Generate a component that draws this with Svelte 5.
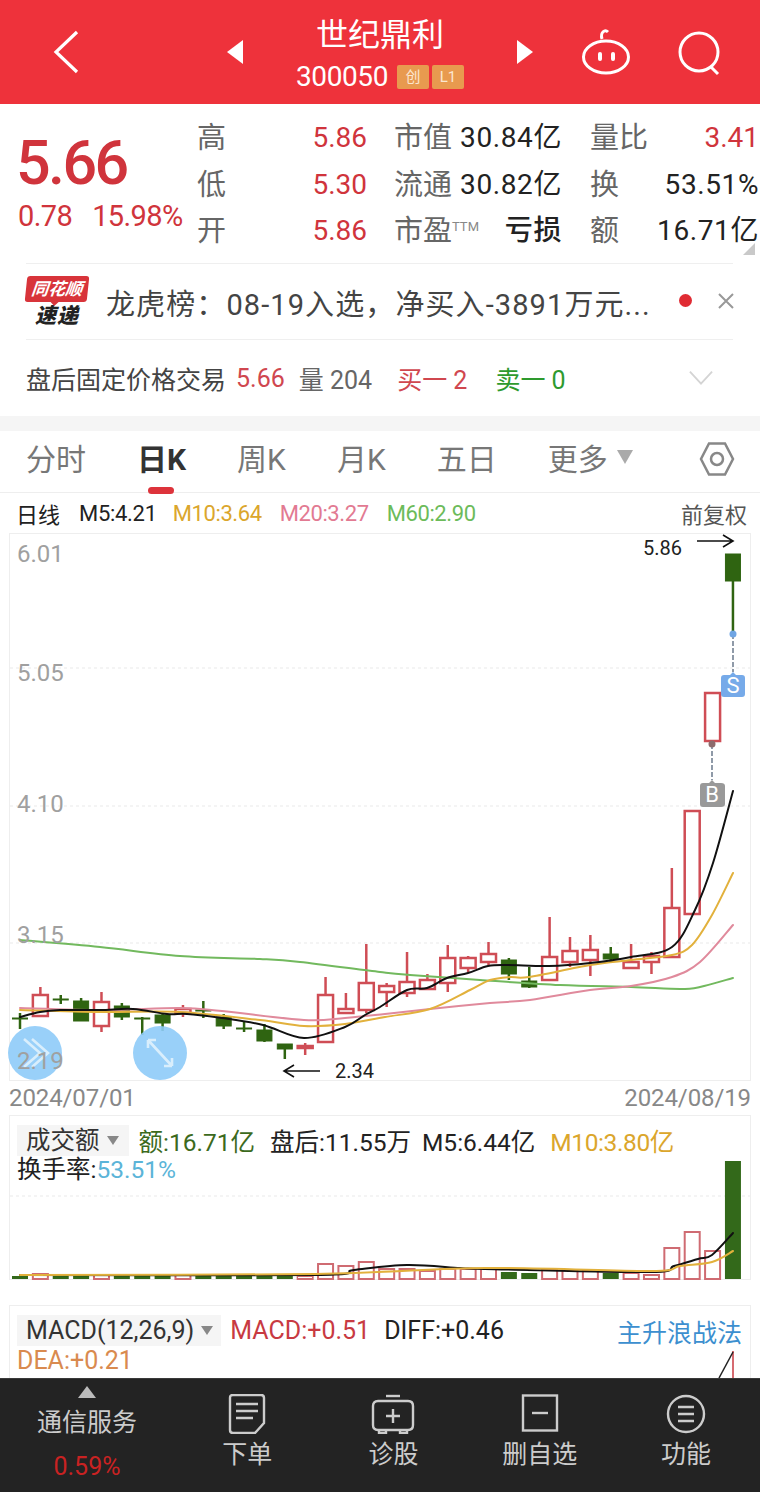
<script>
  const X0 = 20, DX = 20.37;
  // [rising, high, bodyTop, bodyBottom, low]
  const raw = [
    [0,1013,1018,1018,1029],[1,987,995,1016,1016],[0,995,999,999,1004],[0,998,1001,1021,1021],
    [1,992,1002,1026,1032],[0,1003,1006,1017,1020],[0,1017,1018,1018,1035],[0,1013,1015,1023,1031],
    [1,1005,1009,1013,1017],[0,1001,1010,1010,1018],[0,1014,1017,1026,1029],[0,1021,1028,1028,1032],
    [0,1024,1030,1041,1042],[0,1044,1044,1049,1059],[1,1043,1046,1048,1055],[1,977,995,1042,1042],
    [1,993,1009,1013,1013],[1,944,983,1010,1013],[1,983,986,992,1007],[1,952,982,993,997],
    [1,974,980,989,989],[1,945,958,983,992],[1,956,958,968,972],[1,942,954,962,965],
    [0,958,960,974,980],[0,967,981,987,988],[1,917,957,980,980],[1,937,951,962,967],
    [1,935,950,960,976],[0,947,954,959,962],[1,944,962,968,968],[1,952,956,962,974],
    [1,868,908,957,957],[1,811,811,914,914],[1,693,693,741,741],[0,554,554,581,633]
  ];
  const candles = raw.map((c, i) => ({ up: !!c[0], x: X0 + DX * i, high: c[1], top: c[2], bottom: c[3], low: c[4] }));

  // Catmull-Rom through the sampled points, so the averages read as smooth curves
  function smooth(p) {
    let d = `M${p[0][0]} ${p[0][1]}`;
    for (let i = 0; i < p.length - 1; i++) {
      const a = p[Math.max(i - 1, 0)], b = p[i], c = p[i + 1], e = p[Math.min(i + 2, p.length - 1)];
      const k = 1 / 6;
      d += ` C${b[0] + (c[0] - a[0]) * k} ${b[1] + (c[1] - a[1]) * k} ${c[0] - (e[0] - b[0]) * k} ${c[1] - (e[1] - b[1]) * k} ${c[0]} ${c[1]}`;
    }
    return d;
  }
  const m5 = smooth([[20,1017],[40,1012],[60,1010],[100,1010],[133,1009],[167,1014],[187,1014],[222,1018],[263,1025],[304,1038],[345,1027],[365,1015],[380,1007],[407,990],[427,988],[447,978],[468,973],[488,966],[508,965],[549,966],[590,963],[631,957],[672,947],[695,910],[713,863],[733,791]]);
  const m10 = smooth([[20,1010],[100,1012],[180,1012],[260,1020],[304,1026],[345,1024],[385,1017],[430,1009],[470,990],[490,980],[510,977],[529,977],[590,965],[631,960],[672,955],[692,945],[712,915],[733,873]]);
  const m20 = smooth([[20,1008],[100,1010],[180,1008],[222,1011],[304,1020],[345,1018],[385,1014],[430,1009],[490,1003],[530,1000],[590,990],[631,986],[672,977],[700,962],[733,925]]);
  const m60 = smooth([[20,940],[100,947],[180,956],[260,959],[300,962],[380,972],[410,975],[480,980],[560,985],[631,987],[680,989],[700,987],[733,978]]);

  const volTops = [1276,1274,1276,1276,1275,1276,1276,1276,1275,1276,1276,1276,1276,1276,1276,1264,1266,1262,1269,1269,1271,1269,1269,1269,1272,1273,1270,1270,1270,1273,1273,1275,1248,1232,1251,1161];
  const volUp = raw.map((c) => !!c[0]);
  const vols = volTops.map((t, i) => ({ x: X0 + DX * i, top: t, up: volUp[i] }));
  const v5 = smooth([[20,1275],[315,1275],[354,1270],[407,1265],[460,1268],[485,1269],[650,1272],[674,1266],[698,1259],[712,1255],[733,1233]]);
  const v10 = smooth([[20,1275],[315,1274],[485,1268],[650,1271],[680,1266],[712,1262],[733,1251]]);
  const axis = [[6.01,562],[5.05,681],[4.10,812],[3.15,943],[2.19,1069]];

  const stats = [
    ['高','5.86','市值','30.84亿',false,'量比','3.41',true],
    ['低','5.30','流通','30.82亿',false,'换','53.51%',false],
    ['开','5.86','市盈','亏损',true,'额','16.71亿',false]
  ];
</script>

<div class="page">
  <header class="top">
    <svg class="back" viewBox="0 0 28 46"><path d="M25 3 L4 23 L25 43" /></svg>
    <svg class="tri" viewBox="0 0 18 24"><path d="M17 0V24L1 12Z" /></svg>
    <div class="title">
      <div class="name">世纪鼎利</div>
      <div class="code">300050<span class="tag">创</span><span class="tag">L1</span></div>
    </div>
    <svg class="tri" viewBox="0 0 18 24"><path d="M1 0V24L17 12Z" /></svg>
    <svg class="robot" viewBox="0 0 50 50">
      <path class="ln" d="M21 12 C19 5 24 2 27 5" />
      <ellipse class="ln" cx="25" cy="30" rx="22.5" ry="16" />
      <rect class="fl" x="17" y="25" width="4" height="9" rx="2" />
      <rect class="fl" x="30" y="25" width="4" height="9" rx="2" />
    </svg>
    <svg class="search" viewBox="0 0 46 46">
      <circle class="ln" cx="21" cy="21" r="19" />
      <path class="ln" d="M33 36 L40 43" />
    </svg>
  </header>

  <section class="quote">
    <div class="price">
      <div class="big">5.66</div>
      <div class="chg"><span>0.78</span><span>15.98%</span></div>
    </div>
    <div class="stats">
      {#each stats as s}
        <span class="lb">{s[0]}</span>
        <span class="val red">{s[1]}</span>
        <span class="lb">{s[2]}{#if s[2] === '市盈'}<sup>TTM</sup>{/if}</span>
        <span class="val wide" class:bold={s[4]}>{s[3]}</span>
        <span class="lb">{s[5]}</span>
        <span class="val" class:red={s[7]} class:wide={!s[7]}>{s[6]}</span>
      {/each}
    </div>
    <svg class="corner" viewBox="0 0 12 12"><path d="M12 0V12H0Z" /></svg>
  </section>

  <section class="news">
    <div class="logo">
      <div class="logo-top">同花顺</div>
      <div class="logo-bot">速递</div>
    </div>
    <div class="news-text">龙虎榜：08-19入选，净买入-3891万元...</div>
    <span class="dot"></span>
    <svg class="close" viewBox="0 0 18 18"><path d="M2 2L16 16M16 2L2 16" /></svg>
  </section>

  <section class="after">
    <span>盘后固定价格交易</span>
    <span class="r num g1">5.66</span>
    <span class="gr g2">量 204</span>
    <span class="r g3">买一 2</span>
    <span class="gn g4">卖一 0</span>
    <svg class="chev" viewBox="0 0 26 16"><path d="M1 1L13 14L25 1" /></svg>
  </section>

  <div class="band"></div>

  <nav class="tabs">
    <span class="tab t1">分时</span>
    <span class="tab active">日K</span>
    <span class="tab">周K</span>
    <span class="tab">月K</span>
    <span class="tab">五日</span>
    <span class="tab">更多<i class="down"></i></span>
    <svg class="hex" viewBox="0 0 36 36">
      <path d="M10 2.5H26L34 18L26 33.5H10L2 18Z" />
      <circle cx="18" cy="18" r="6" />
    </svg>
  </nav>

  <main class="main">
    <div class="ma">
      <span class="ma-a">日线</span>
      <span class="ma-b">M5:4.21</span>
      <span class="c10">M10:3.64</span>
      <span class="c20">M20:3.27</span>
      <span class="c60">M60:2.90</span>
      <span class="fq">前复权</span>
    </div>

    <div class="box kline">
      <svg class="chart" viewBox="9 533 742 547" width="742" height="547">
        {#each [668,806,943] as y}
          <line class="grid" x1="10" x2="750" y1={y} y2={y} />
        {/each}
        {#each candles as c}
          <g class={c.up ? 'up' : 'dn'}>
            <line x1={c.x} x2={c.x} y1={c.high} y2={c.top} />
            <line x1={c.x} x2={c.x} y1={c.bottom} y2={c.low} />
            <rect x={c.x - 7.5} y={c.top} width="15" height={Math.max(c.bottom - c.top, 1)} />
          </g>
        {/each}
        <path class="ml l60" d={m60} />
        <path class="ml l20" d={m20} />
        <path class="ml l10" d={m10} />
        <path class="ml l5" d={m5} />

        <line class="dash" x1="733" x2="733" y1="634" y2="672" />
        <circle class="s-dot" cx="733" cy="634" r="3.5" />
        <path class="s-flag" d="M724 675 H730 L733 672 L736 675 H742 Q745 675 745 678 V694 Q745 697 742 697 H724 Q721 697 721 694 V678 Q721 675 724 675Z" />
        <text class="flag" x="733" y="693">S</text>
        <line class="dash" x1="712" x2="712" y1="744" y2="780" />
        <circle class="b-dot" cx="712" cy="744" r="3.5" />
        <path class="b-flag" d="M703 783 H709 L712 780 L715 783 H721 Q725 783 725 786 V804 Q725 807 721 807 H703 Q700 807 700 804 V786 Q700 783 703 783Z" />
        <text class="flag" x="712" y="802">B</text>

        <text class="mark" x="643" y="555">5.86</text>
        <path class="arrow" d="M697 541H733M723 535L733 541L723 547" />
        <text class="mark" x="335" y="1078">2.34</text>
        <path class="arrow" d="M320 1071H284M294 1065L284 1071L294 1077" />

        <circle class="fab" cx="35" cy="1053" r="27" />
        <path class="fab-ln" d="M24 1039L40 1053L24 1067M32 1039L48 1053L32 1067" />
        <circle class="fab" cx="160" cy="1053" r="27" />
        <path class="fab-ln" d="M148 1040H156M148 1040V1048M148 1040L172 1066M172 1066H164M172 1066V1058" />
        {#each axis as a}
          <text class="axis" x="17" y={a[1]}>{a[0].toFixed(2)}</text>
        {/each}
      </svg>
    </div>

    <div class="dates"><span>2024/07/01</span><span>2024/08/19</span></div>

    <div class="box vol">
      <svg class="chart" viewBox="9 1115 742 165" width="742" height="165">
        <line class="grid" x1="10" x2="750" y1="1196" y2="1196" />
        {#each vols as v}
          {#if v.up}
            <rect class="vup" x={v.x - 7.5} y={v.top} width="15" height={1279 - v.top} />
          {:else}
            <rect class="vdn" x={v.x - 8} y={v.top} width="16" height={1279 - v.top} />
          {/if}
        {/each}
        <path class="ml v5" d={v5} />
        <path class="ml v10" d={v10} />
      </svg>
      <div class="legend">
        <div class="lrow">
          <span class="sel">成交额<i class="down small"></i></span>
          <span class="dg">额:16.71亿</span>
          <span class="s2">盘后:11.55万</span>
          <span class="s3">M5:6.44亿</span>
          <span class="c10 s4">M10:3.80亿</span>
        </div>
        <div class="lrow2">换手率:<span class="cy">53.51%</span></div>
      </div>
    </div>

    <div class="box macd">
      <svg class="chart" viewBox="9 1305 742 73" width="742" height="73">
        <line class="mline" x1="733" x2="733" y1="1351" y2="1378" />
        <line class="mblack" x1="733" x2="719" y1="1352" y2="1378" />
      </svg>
      <div class="legend">
        <div class="lrow">
          <span class="sel">MACD(12,26,9)<i class="down small"></i></span>
          <span class="mr">MACD:+0.51</span>
          <span class="m3">DIFF:+0.46</span>
          <span class="strategy">主升浪战法</span>
        </div>
        <div class="lrow2 dea">DEA:+0.21</div>
      </div>
    </div>
  </main>

  <footer class="foot">
    <div class="fitem first">
      <i class="up-t"></i>
      <span class="ft">通信服务</span>
      <span class="pct">0.59%</span>
    </div>
    <div class="fitem">
      <svg class="ic" viewBox="0 0 40 40">
        <path d="M6 1H34Q37 1 37 4V29L28 39H6Q3 39 3 36V4Q3 1 6 1Z" />
        <path d="M9 10H31M9 17H31M9 24H26" />
      </svg>
      <span class="fl2">下单</span>
    </div>
    <div class="fitem">
      <svg class="ic wide" viewBox="0 0 44 40">
        <path d="M15 2H29" />
        <path d="M7 7H37Q42 7 42 12V31Q42 36 37 36H7Q2 36 2 31V12Q2 7 7 7Z" />
        <path d="M22 15V29M15 22H29" />
        <path d="M8 37V39H15V37M29 37V39H36V37" />
      </svg>
      <span class="fl2">诊股</span>
    </div>
    <div class="fitem">
      <svg class="ic" viewBox="0 0 40 40">
        <rect x="3" y="1.5" width="34" height="35" />
        <path d="M12 19H28" />
      </svg>
      <span class="fl2">删自选</span>
    </div>
    <div class="fitem">
      <svg class="ic" viewBox="0 0 40 40">
        <circle cx="20" cy="20" r="18" />
        <path d="M12 13H28M12 20H28M12 27H28" />
      </svg>
      <span class="fl2">功能</span>
    </div>
  </footer>
</div>

<style>
  :global(body) { margin: 0; background: #fff; }
  .page {
    width: 760px; height: 1492px; display: flex; flex-direction: column; overflow: hidden;
    font-family: Roboto, "Noto Sans CJK SC", sans-serif; color: #333; background: #fff;
  }
  .top {
    height: 104px; flex: none; background: #ee323b; display: flex; align-items: center; color: #fff;
  }
  .back { width: 28px; height: 46px; margin: 0 0 0 52px; }
  .back path { fill: none; stroke: #fff; stroke-width: 3.2; }
  .tri { width: 18px; height: 24px; }
  .tri path { fill: #fff; }
  .top > .tri:nth-child(2) { margin-left: 146px; }
  .title { width: 272px; text-align: center; }
  .name { font-size: 32px; line-height: 38px; margin-top: 3px; }
  .code { font-size: 28px; line-height: 30px; margin-top: 8px; display: flex; justify-content: center; align-items: center; letter-spacing: -0.4px; }
  .tag {
    background: #e89a4f; color: #fbe6cf; font-size: 15px; line-height: 24px; height: 24px; width: 32px;
    text-align: center; border-radius: 2px; margin-left: 3px; letter-spacing: 0;
  }
  .tag:first-of-type { margin-left: 9px; }
  .robot { width: 50px; height: 50px; margin-left: 47px; margin-top: 0; }
  .search { width: 46px; height: 46px; margin-left: 47px; margin-top: 3px; }
  .ln { fill: none; stroke: #fff; stroke-width: 3; }
  .fl { fill: #fff; }

  .quote { height: 159px; flex: none; position: relative; display: flex; }
  .price { width: 197px; flex: none; padding-left: 16px; box-sizing: border-box; color: #d0343c; }
  .big { font-size: 61px; line-height: 62px; margin-top: 28px; font-weight: 500; letter-spacing: -2.6px; }
  .chg { font-size: 29px; line-height: 32px; margin-top: 6px; margin-left: 2px; display: flex; gap: 20px; letter-spacing: -0.6px; white-space: nowrap; }
  .stats {
    display: grid; grid-template-columns: 60px 110px 87px 108px 88px 109px; grid-auto-rows: 46.5px;
    margin-top: 11px; width: 563px; position: relative;
  }
  .stats .lb { font-size: 29px; line-height: 46.5px; color: #666; white-space: nowrap; }
  .stats .val { font-size: 28px; line-height: 46.5px; text-align: right; color: #222; white-space: nowrap; }
  .stats .val.wide { letter-spacing: 0.6px; }
  .stats .lb:nth-child(6n+3) { margin-left: 27px; }
  .stats .lb:nth-child(6n+5) { margin-left: 28px; }
  .stats .val.red { color: #d0343c; }
  .stats .val.bold { font-weight: 500; }
  .stats sup { font-size: 13px; color: #888; vertical-align: 10px; line-height: 0; }
  .corner { position: absolute; right: 5px; bottom: 8px; width: 12px; height: 12px; }
  .corner path { fill: #c9c9c9; }

  .news {
    height: 75px; flex: none; margin: 0 27px 0 26px; border-top: 1px solid #efefef; border-bottom: 1px solid #efefef;
    display: flex; align-items: center;
  }
  .logo { width: 62px; height: 52px; flex: none; margin-top: 1px; }
  .logo-top {
    background: #d8343a; color: #fff; font-size: 17px; font-weight: 700; font-style: italic; line-height: 26px; height: 26px;
    text-align: center; border-radius: 3px; transform: skewX(-6deg); position: relative;
  }
  .logo-top::after {
    content: ""; position: absolute; left: 26px; bottom: -4px; width: 0; height: 0;
    border-left: 4px solid transparent; border-right: 4px solid transparent; border-top: 4px solid #d8343a;
  }
  .logo-bot { font-size: 21px; line-height: 24px; font-weight: 900; font-style: italic; color: #222; text-align: center; margin-top: 2px; letter-spacing: 1px; }
  .news-text { font-size: 29px; margin-left: 18px; color: #444; white-space: nowrap; width: 573px; flex: none; overflow: hidden; letter-spacing: 1.1px; }
  .dot { width: 13px; height: 13px; background: #e02b33; border-radius: 50%; flex: none; margin-top: -2px; }
  .close { width: 18px; height: 18px; margin-left: 25px; flex: none; margin-top: -2px; }
  .close path { stroke: #999; stroke-width: 2; fill: none; }

  .after {
    height: 76px; flex: none; display: flex; align-items: center; padding-left: 26px; font-size: 25px; color: #444; white-space: nowrap;
  }
  .after .r { color: #d0474f; }
  .after .gr { color: #666; }
  .after .gn { color: #2e9a2e; }
  .g1 { margin-left: 10px; }
  .g2 { margin-left: 14px; }
  .g3 { margin-left: 25px; }
  .g4 { margin-left: 28px; }
  .chev { width: 24px; height: 16px; margin-left: 123px; }
  .chev path { fill: none; stroke: #d4d4d4; stroke-width: 2; }
  .band { height: 15px; flex: none; background: #f5f5f5; }

  .tabs {
    height: 62px; flex: none; box-sizing: border-box; display: flex; align-items: center; padding-left: 26px; border-bottom: 1px solid #eee; position: relative;
    font-size: 30px; color: #777;
  }
  .tab { position: relative; line-height: 1; margin-right: 51px; white-space: nowrap; top: -2px; }
  .tab.active { color: #333; font-weight: 700; }
  .tab.active::after {
    content: ""; position: absolute; left: 11px; top: 42px; width: 26px; height: 7px; background: #dd333b; border-radius: 4px;
  }
  .down {
    display: inline-block; width: 0; height: 0; border-left: 8px solid transparent; border-right: 8px solid transparent;
    border-top: 14px solid #aaa; margin-left: 9px; vertical-align: 6px;
  }
  .down.small { border-left-width: 6px; border-right-width: 6px; border-top-width: 9px; border-top-color: #888; margin-left: 7px; vertical-align: 4px; }
  .hex { width: 36px; height: 36px; position: absolute; right: 25px; top: 10px; }
  .hex path, .hex circle { fill: none; stroke: #888; stroke-width: 2.5; }

  .main { flex: 1; min-height: 0; overflow: hidden; position: relative; }
  .ma {
    height: 40px; display: flex; align-items: center; padding: 0 13px 0 16px; font-size: 22px; color: #222; box-sizing: border-box; white-space: nowrap;
  }
  .ma-b { margin-left: 19px; margin-right: 16px; letter-spacing: -0.3px; }
  .c10, .c20, .c60 { letter-spacing: -0.4px; }
  .ma .c10, .ma .c20, .ma .c60 { margin-right: 18px; }
  .c10 { color: #dba62c; }
  .c20 { color: #e27a92; }
  .c60 { color: #6cbb5a; }
  .fq { margin-left: auto; color: #555; }

  .box { margin: 0 9px; border: 1px solid #eee; box-sizing: border-box; position: relative; width: 742px; }
  .chart { display: block; position: absolute; left: -1px; top: -1px; overflow: visible; }
  .kline { height: 548px; }
  .grid { stroke: #e9e9e9; stroke-width: 1; stroke-dasharray: 3 3; }
  .axis { font-size: 24px; fill: #a0a0a0; }
  .up line { stroke: #cf4d55; stroke-width: 2.5; }
  .up rect { fill: #fff; stroke: #cf4d55; stroke-width: 2.5; }
  .dn line { stroke: #2f6411; stroke-width: 2.5; }
  .dn rect { fill: #2f6411; stroke: #2f6411; stroke-width: 1; }
  .ml { fill: none; stroke-linejoin: round; stroke-linecap: round; stroke-width: 2; }
  .l5 { stroke: #111; }
  .l10 { stroke: #e2b13c; }
  .l20 { stroke: #e08a9c; }
  .l60 { stroke: #72b95e; }
  .dash { stroke: #8f9aa8; stroke-width: 2; stroke-dasharray: 5 2; }
  .s-dot { fill: #6fa5e4; }
  .b-dot { fill: #8d6b6d; }
  .s-flag { fill: #76aae9; }
  .b-flag { fill: #999; }
  .flag { font-size: 22px; fill: #fff; text-anchor: middle; font-family: Roboto, sans-serif; }
  .mark { font-size: 20px; fill: #222; }
  .arrow { fill: none; stroke: #111; stroke-width: 1.6; }
  .fab { fill: #8ecbf8; fill-opacity: 0.9; }
  .fab-ln { fill: none; stroke: #d9eefc; stroke-width: 2.6; }

  .dates { height: 34px; margin: 0 9px; display: flex; justify-content: space-between; font-size: 24px; line-height: 35px; color: #888; letter-spacing: -0.1px; }
  .vol { height: 165px; }
  .vup { fill: #fff; stroke: #cf6b72; stroke-width: 2; }
  .vdn { fill: #33691a; }
  .v5 { stroke: #111; }
  .v10 { stroke: #e2b13c; }
  .legend { position: relative; padding: 9px 0 0 7px; font-size: 24.5px; color: #222; }
  .lrow { display: flex; align-items: center; height: 31px; white-space: nowrap; }
  .sel { background: #f5f5f5; height: 31px; line-height: 31px; padding: 0 8px 0 9px; color: #333; }
  .vol .sel { padding-right: 10px; }
  .dg { color: #3c6a1d; margin-left: 10px; }
  .s2 { margin-left: 15px; }
  .s3 { margin-left: 11px; }
  .s4 { margin-left: 15px; }
  .lrow2 { line-height: 28px; }
  .cy { color: #5bb4d8; }
  .macd { margin-top: 25px; height: 100px; }
  .macd .legend { font-size: 25px; }
  .mr { color: #c83a42; margin-left: 9px; }
  .m3 { margin-left: 14px; }
  .strategy { margin-left: auto; margin-right: 8px; color: #3c8fcf; }
  .dea { color: #d98a4f; line-height: 30px; }
  .mline { stroke: #c83a42; stroke-width: 1.5; }
  .mblack { stroke: #222; stroke-width: 1.5; }

  .foot {
    height: 114px; flex: none; background: #232323; display: grid; grid-template-columns: 174px repeat(4, 146.3px);
    border-top: 1px solid #3a3a3a; box-sizing: border-box; color: #ccc;
  }
  .fitem { display: flex; flex-direction: column; align-items: center; }
  .up-t { width: 0; height: 0; border-left: 9px solid transparent; border-right: 9px solid transparent; border-bottom: 12px solid #bbb; margin-top: 7px; }
  .ft { font-size: 25px; line-height: 30px; margin-top: 10px; }
  .pct { font-size: 25px; line-height: 30px; margin-top: 14px; color: #c92222; }
  .ic { width: 40px; height: 40px; margin-top: 15px; }
  .ic.wide { width: 44px; }
  .ic path, .ic rect, .ic circle { fill: none; stroke: #ccc; stroke-width: 2.4; }
  .fl2 { font-size: 25px; line-height: 30px; margin-top: 6px; }
</style>
